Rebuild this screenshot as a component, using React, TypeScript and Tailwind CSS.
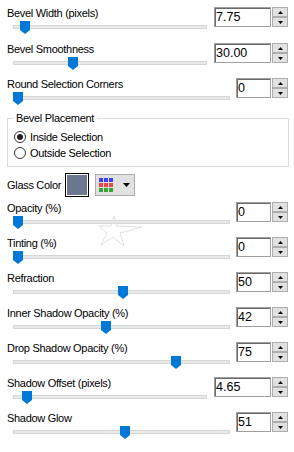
import React from "react";

function Thumb({ left }: { left: number }) {
  return (
    <svg
      width="10"
      height="13"
      viewBox="0 0 10 13"
      className="absolute top-0"
      style={{ left }}
    >
      <path d="M0 0 H10 V9 L5 13 L0 9 Z" fill="#0078d7" />
    </svg>
  );
}

function SpinBtn({ up }: { up?: boolean }) {
  return (
    <div className="w-[16px] h-[10px] bg-[#e1e1e1] border border-[#adadad] flex items-center justify-center">
      <svg width="5" height="3" viewBox="0 0 5 3">
        {up ? <path d="M0 3 L2.5 0 L5 3 Z" fill="#000" /> : <path d="M0 0 L5 0 L2.5 3 Z" fill="#000" />}
      </svg>
    </div>
  );
}

function Spin({ value, wide }: { value: string; wide?: boolean }) {
  return (
    <div className="flex gap-[1px]">
      <div
        className={
          wide
            ? "w-[57px] h-[20px] border border-[#a0a0a0] shadow-[inset_1px_1px_0_#696969] bg-white flex items-center pl-[1px] text-[12.5px] tracking-normal leading-none text-black"
            : "w-[35px] h-[20px] border border-[#a0a0a0] shadow-[inset_1px_1px_0_#696969] bg-white flex items-center pl-[1px] text-[12.5px] tracking-normal leading-none text-black"
        }
      >
        {value}
      </div>
      <div className="flex flex-col">
        <SpinBtn up />
        <SpinBtn />
      </div>
    </div>
  );
}

function Row({
  label,
  value,
  pos,
  wide,
  h,
}: {
  label: string;
  value: string;
  pos: number;
  wide?: boolean;
  h: string;
}) {
  return (
    <div className={`flex ${h}`}>
      <div className="flex-1 flex flex-col">
        <div className="h-[13px] leading-[13px] whitespace-nowrap">{label}</div>
        <div className={wide ? "relative ml-[6px] mt-[1px] h-[14px] w-[194px]" : "relative ml-[6px] mt-[1px] h-[14px] w-[217px]"}>
          <div className="mt-[4px] h-[4px] bg-[#e7eaea] border border-[#d6d6d6]" />
          <Thumb left={pos} />
        </div>
      </div>
      <Spin value={value} wide={wide} />
    </div>
  );
}

function Radio({ checked, label }: { checked?: boolean; label: string }) {
  return (
    <div className="h-[16px] flex items-center gap-[4px] ml-[1px]">
      <span className="w-[12px] h-[12px] rounded-full border border-[#333333] bg-white flex items-center justify-center">
        {checked && <span className="w-[6px] h-[6px] rounded-full bg-[#222222]" />}
      </span>
      <span className="leading-[13px]">{label}</span>
    </div>
  );
}

export default function App() {
  return (
    <div
      className="relative w-[294px] h-[452px] bg-white overflow-hidden pt-[7px] pl-[7px] pr-[6px] text-[11px] tracking-[-0.3px] text-black"
      style={{ fontFamily: '"Liberation Sans", Arial, sans-serif' }}
    >
      <Row label="Bevel Width (pixels)" value="7.75" pos={7} wide h="h-[36px]" />
      <Row label="Bevel Smoothness" value="30.00" pos={55} wide h="h-[35px]" />
      <Row label="Round Selection Corners" value="0" pos={0} h="h-[34px]" />

      <fieldset className="w-[282px] border border-[#dcdcdc] px-[5px] pt-[4px] pb-[5px]">
        <legend className="px-[3px] leading-[13px]">Bevel Placement</legend>
        <Radio checked label="Inside Selection" />
        <Radio label="Outside Selection" />
      </fieldset>

      <div className="mt-[6px] h-[24px] flex items-center">
        <div className="w-[58px] whitespace-nowrap">Glass Color</div>
        <div className="w-[24px] h-[24px] border border-black bg-white p-[1px]">
          <div className="w-full h-full bg-[#6b7890]" />
        </div>
        <div className="ml-[6px] w-[40px] h-[22px] bg-[#e1e1e1] border border-[#adadad] flex items-center pl-[3px]">
          <svg width="15" height="15" viewBox="0 0 15 15">
            <rect x="0" y="0" width="4" height="4" fill="#3f3ff0" />
            <rect x="5" y="0" width="4" height="4" fill="#3f3ff0" />
            <rect x="10" y="0" width="4" height="4" fill="#3f3ff0" />
            <rect x="0" y="5" width="4" height="4" fill="#e84848" />
            <rect x="5" y="5" width="4" height="4" fill="#e84848" />
            <rect x="10" y="5" width="4" height="4" fill="#e84848" />
            <rect x="0" y="10" width="4" height="4" fill="#3aa23a" />
            <rect x="5" y="10" width="4" height="4" fill="#3aa23a" />
            <rect x="10" y="10" width="4" height="4" fill="#3aa23a" />
          </svg>
          <svg width="7" height="4" viewBox="0 0 7 4" className="ml-[9px]">
            <path d="M0 0 H7 L3.5 4 Z" fill="#000" />
          </svg>
        </div>
      </div>

      <div className="mt-[5px]">
        <Row label="Opacity (%)" value="0" pos={0} h="h-[35px]" />
        <Row label="Tinting (%)" value="0" pos={0} h="h-[35px]" />
        <Row label="Refraction" value="50" pos={105} h="h-[35px]" />
        <Row label="Inner Shadow Opacity (%)" value="42" pos={88} h="h-[35px]" />
        <Row label="Drop Shadow Opacity (%)" value="75" pos={158} h="h-[35px]" />
        <Row label="Shadow Offset (pixels)" value="4.65" pos={9} wide h="h-[35px]" />
        <Row label="Shadow Glow" value="51" pos={107} h="h-[35px]" />
      </div>

      <svg
        width="46"
        height="34"
        viewBox="0 0 46 34"
        className="absolute left-[98px] top-[214px] pointer-events-none"
      >
        <path
          d="M16 2 L19 12 L44 13 L22 19 L26 32 L15 23 L3 31 L9 19 L1 12 L13 12 Z"
          fill="none"
          stroke="#e0e0e0"
          strokeWidth="1"
        />
      </svg>
    </div>
  );
}
